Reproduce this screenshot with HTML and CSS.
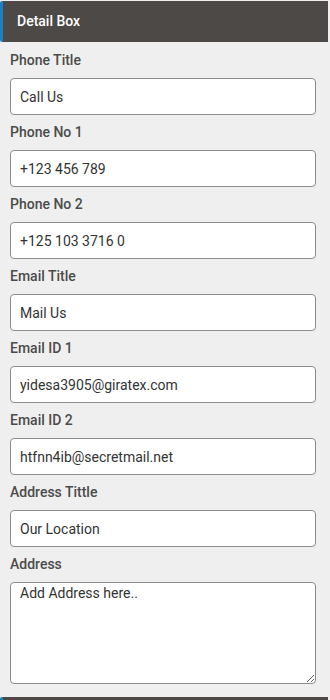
FILE: index.html
```html
<!DOCTYPE html>
<html lang="en">

<head>
    <meta charset="UTF-8">
    <meta name="viewport" content="width=device-width, initial-scale=1.0">
    <title>Detail Box</title>
    <link rel="stylesheet" href="styles.css">
</head>

<body>
    <div class="panel">
        <div class="panel-head">Detail Box</div>
        <div class="panel-body">
            <div class="field">
                <label>Phone Title</label>
                <input type="text" value="Call Us">
            </div>
            <div class="field">
                <label>Phone No 1</label>
                <input type="text" value="+123 456 789">
            </div>
            <div class="field">
                <label>Phone No 2</label>
                <input type="text" value="+125 103 3716 0">
            </div>
            <div class="field">
                <label>Email Title</label>
                <input type="text" value="Mail Us">
            </div>
            <div class="field">
                <label>Email ID 1</label>
                <input type="text" value="yidesa3905@giratex.com">
            </div>
            <div class="field">
                <label>Email ID 2</label>
                <input type="text" value="htfnn4ib@secretmail.net">
            </div>
            <div class="field">
                <label>Address Tittle</label>
                <input type="text" value="Our Location">
            </div>
            <div class="field">
                <label>Address</label>
                <textarea>Add Address here..</textarea>
            </div>
        </div>
    </div>
    <div class="panel">
        <div class="panel-head"></div>
    </div>
</body>

</html>
```

FILE: styles.css
```css
body {
    margin: 0px;
    padding: 0px;
    background-color: #efefef;
    font-family: Roboto, "Liberation Sans", sans-serif;
}

.panel {
    width: 328px;
}

.panel-head {
    margin-top: 1px;
    height: 41px;
    line-height: 40px;
    padding-left: 14px;
    border-left: 3px solid #1f7fc4;
    border-radius: 2px 0px 0px 2px;
    background-color: #4d4946;
    color: #ffffff;
    font-size: 14px;
    font-weight: 500;
}

.panel-body {
    padding: 8px 12px 12px 10px;
    display: flex;
    flex-direction: column;
    gap: 7px;
}

.field {
    display: flex;
    flex-direction: column;
}

.field label {
    line-height: 20px;
    font-size: 14px;
    font-weight: 500;
    color: #4b4b4b;
    margin-bottom: 8px;
}

.field input,
.field textarea {
    box-sizing: border-box;
    width: 100%;
    margin: 0px;
    border: 1px solid #8c8c8c;
    border-radius: 4px;
    background-color: #ffffff;
    font-family: Roboto, "Liberation Sans", sans-serif;
    font-size: 14px;
    color: #333333;
}

.field input {
    height: 37px;
    padding: 0px 9px;
}

.field textarea {
    height: 102px;
    padding: 2px 9px;
    line-height: 16px;
}
```
